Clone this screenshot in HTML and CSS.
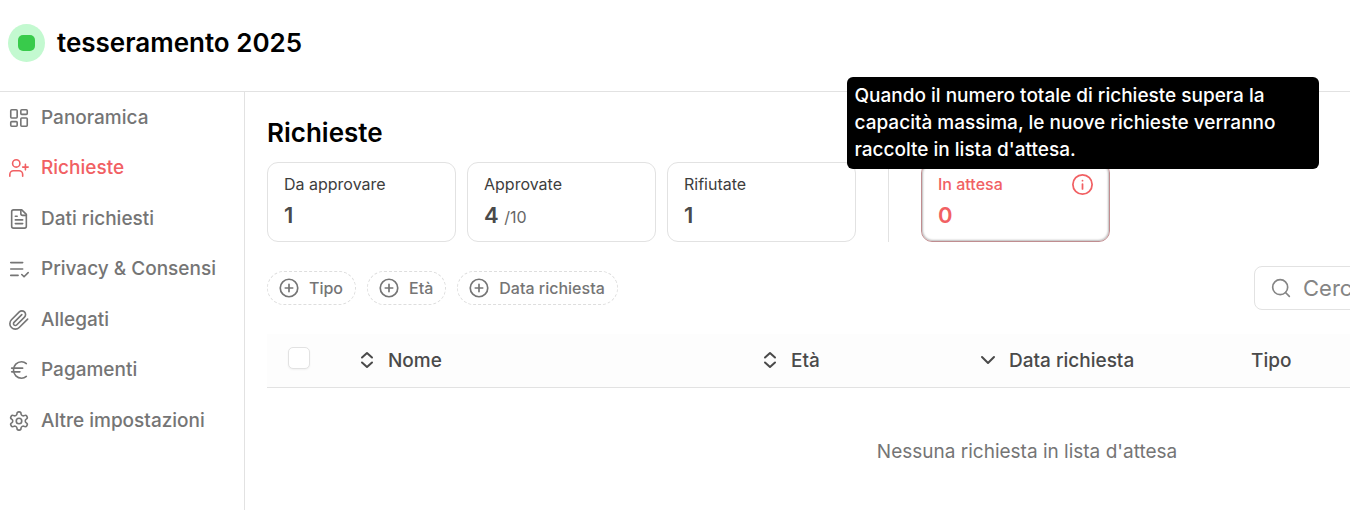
FILE: index.html
```html
<!DOCTYPE html>
<html lang="it">
<head>
  <meta charset="UTF-8" />
  <title>tesseramento 2025 | Richieste</title>
  <meta name="viewport" content="width=device-width, initial-scale=1.0" />
  <link rel="stylesheet" href="styles.css">
</head>
<body>
  <header class="page-header">
    <span class="status"><span class="status-dot"></span></span>
    <h1>tesseramento 2025</h1>
  </header>

  <div class="layout">
    <nav class="sidebar">
      <a href="#panoramica">
        <svg class="icon" viewBox="0 0 24 24"><rect x="3" y="3" width="7" height="9" rx="1"/><rect x="14" y="3" width="7" height="5" rx="1"/><rect x="14" y="12" width="7" height="9" rx="1"/><rect x="3" y="16" width="7" height="5" rx="1"/></svg>
        Panoramica
      </a>
      <a href="#richieste" class="active">
        <svg class="icon" viewBox="0 0 24 24"><path d="M16 21v-2a4 4 0 0 0-4-4H6a4 4 0 0 0-4 4v2"/><circle cx="9" cy="7" r="4"/><path d="M19 8v6M22 11h-6"/></svg>
        Richieste
      </a>
      <a href="#dati">
        <svg class="icon" viewBox="0 0 24 24"><path d="M15 2H6a2 2 0 0 0-2 2v16a2 2 0 0 0 2 2h12a2 2 0 0 0 2-2V7Z"/><path d="M14 2v4a2 2 0 0 0 2 2h4M10 9H8M16 13H8M16 17H8"/></svg>
        Dati richiesti
      </a>
      <a href="#privacy">
        <svg class="icon" viewBox="0 0 24 24"><path d="M3 5h13M3 12h13M3 19h8M15 18l2.500 2.500 4.500-4.500"/></svg>
        Privacy &amp; Consensi
      </a>
      <a href="#allegati">
        <svg class="icon" viewBox="0 0 24 24"><path d="m21.440 11.050-9.190 9.190a6 6 0 0 1-8.490-8.490l8.570-8.570A4 4 0 1 1 18 8.840l-8.590 8.570a2 2 0 0 1-2.830-2.830l8.490-8.480"/></svg>
        Allegati
      </a>
      <a href="#pagamenti">
        <svg class="icon" viewBox="0 0 24 24"><path d="M4 10h12M4 14h9M20 5a8 8 0 0 0-5.200-2A8.800 8.800 0 0 0 6 12c0 5 3.900 9 8.800 9 2 0 3.800-.8 5.200-2"/></svg>
        Pagamenti
      </a>
      <a href="#impostazioni">
        <svg class="icon" viewBox="0 0 24 24"><path d="M12.220 2h-.44a2 2 0 0 0-2 2v.18a2 2 0 0 1-1 1.730l-.43.25a2 2 0 0 1-2 0l-.15-.08a2 2 0 0 0-2.730.73l-.22.38a2 2 0 0 0 .73 2.730l.15.1a2 2 0 0 1 1 1.720v.51a2 2 0 0 1-1 1.740l-.15.09a2 2 0 0 0-.73 2.730l.22.38a2 2 0 0 0 2.730.73l.15-.08a2 2 0 0 1 2 0l.43.25a2 2 0 0 1 1 1.730V20a2 2 0 0 0 2 2h.44a2 2 0 0 0 2-2v-.18a2 2 0 0 1 1-1.730l.43-.25a2 2 0 0 1 2 0l.15.08a2 2 0 0 0 2.730-.73l.22-.39a2 2 0 0 0-.73-2.730l-.15-.08a2 2 0 0 1-1-1.740v-.5a2 2 0 0 1 1-1.740l.15-.09a2 2 0 0 0 .73-2.730l-.22-.38a2 2 0 0 0-2.730-.73l-.15.08a2 2 0 0 1-2 0l-.43-.25a2 2 0 0 1-1-1.730V4a2 2 0 0 0-2-2z"/><circle cx="12" cy="12" r="3"/></svg>
        Altre impostazioni
      </a>
    </nav>

    <main class="content">
      <h2>Richieste</h2>

      <div class="stats">
        <button type="button" class="stat">
          <span class="stat-label">Da approvare</span>
          <span class="stat-value">1</span>
        </button>
        <button type="button" class="stat">
          <span class="stat-label">Approvate</span>
          <span class="stat-value">4 <small>/10</small></span>
        </button>
        <button type="button" class="stat">
          <span class="stat-label">Rifiutate</span>
          <span class="stat-value">1</span>
        </button>
        <span class="divider"></span>
        <button type="button" class="stat selected" aria-describedby="waiting-tip">
          <span class="stat-label">In attesa
            <span class="info">
              <svg class="icon" viewBox="0 0 24 24"><circle cx="12" cy="12" r="11"/><path d="M12 17v-5.500M12 7.500v.1"/></svg>
              <span class="tooltip" id="waiting-tip" role="tooltip">Quando il numero totale di richieste supera la capacità massima, le nuove richieste verranno raccolte in lista d'attesa.</span>
            </span>
          </span>
          <span class="stat-value">0</span>
        </button>
      </div>

      <div class="toolbar">
        <div class="filters">
          <button type="button" class="chip">
            <svg class="icon" viewBox="0 0 24 24"><circle cx="12" cy="12" r="10.500"/><path d="M12 7.500v9M7.500 12h9"/></svg>
            Tipo
          </button>
          <button type="button" class="chip">
            <svg class="icon" viewBox="0 0 24 24"><circle cx="12" cy="12" r="10.500"/><path d="M12 7.500v9M7.500 12h9"/></svg>
            Età
          </button>
          <button type="button" class="chip">
            <svg class="icon" viewBox="0 0 24 24"><circle cx="12" cy="12" r="10.500"/><path d="M12 7.500v9M7.500 12h9"/></svg>
            Data richiesta
          </button>
        </div>
        <label class="search">
          <svg class="icon" viewBox="0 0 24 24"><circle cx="11" cy="11" r="9"/><path d="m22 22-4.600-4.600"/></svg>
          <input type="search" placeholder="Cerca" aria-label="Cerca">
        </label>
      </div>

      <table class="requests">
        <thead>
          <tr>
            <th class="col-check"><input type="checkbox" aria-label="Seleziona tutte"></th>
            <th class="col-name">
              <button type="button" class="sort">
                <svg class="icon" viewBox="0 0 18 18"><path d="M4 6.500 9 2l5 4.500M4 11.500 9 16l5-4.500"/></svg>
                Nome
              </button>
            </th>
            <th class="col-age">
              <button type="button" class="sort">
                <svg class="icon" viewBox="0 0 18 18"><path d="M4 6.500 9 2l5 4.500M4 11.500 9 16l5-4.500"/></svg>
                Età
              </button>
            </th>
            <th class="col-date">
              <button type="button" class="sort">
                <svg class="icon" viewBox="0 0 18 18"><path d="m3 6 6 6 6-6"/></svg>
                Data richiesta
              </button>
            </th>
            <th>Tipo</th>
          </tr>
        </thead>
        <tbody>
          <tr>
            <td colspan="5" class="empty">Nessuna richiesta in lista d'attesa</td>
          </tr>
        </tbody>
      </table>
    </main>
  </div>
</body>
</html>
```
FILE: styles.css
```css
* {
  box-sizing: border-box;
}

body {
  font-family: Inter, sans-serif;
  font-size: 19px;
  color: #000;
  background: #fff;
  margin: 0;
  min-height: 100vh;
  overflow-y: hidden;
}

h1, h2 {
  font-size: 26px;
  font-weight: 600;
  line-height: 36px;
  margin: 0;
}

button {
  font-family: inherit;
  color: inherit;
  background: none;
  border: none;
  padding: 0;
  cursor: pointer;
}

.icon {
  width: 20px;
  height: 20px;
  flex: none;
  fill: none;
  stroke: currentColor;
  stroke-width: 2;
  stroke-linecap: round;
  stroke-linejoin: round;
}

.page-header {
  display: flex;
  align-items: center;
  gap: 12px;
  padding: 24px 8px 29px;
  border-bottom: 1px solid #e2e2e2;
}

.status {
  display: flex;
  align-items: center;
  justify-content: center;
  width: 37px;
  height: 38px;
  border-radius: 50%;
  background: #c3f9d0;
}

.status-dot {
  width: 17px;
  height: 16px;
  border-radius: 5px;
  background: #38cb4b;
}

/* the table is wider than small windows, clip it sideways only */
.layout {
  display: flex;
  overflow-x: clip;
}

/* Sidebar */
.sidebar {
  flex: none;
  width: 245px;
  padding: 9px 8px 62px;
  border-right: 1px solid #e2e2e2;
  display: grid;
  grid-template-rows: repeat(7, 1fr);
}

.sidebar a {
  display: flex;
  align-items: flex-start;
  gap: 11px;
  line-height: 34px;
  font-weight: 500;
  color: #757575;
  text-decoration: none;
}

.sidebar .icon {
  width: 22px;
  height: 22px;
  margin-top: 6px;
  stroke-width: 1.75;
}

.sidebar a.active {
  color: #f16063;
}

/* Main column */
.content {
  flex: 0 0 1542px;
  min-width: 0;
  padding: 23px 0 0 22px;
}

.stats {
  display: flex;
  gap: 11px;
  margin-top: 11px;
}

.stat {
  width: 189px;
  height: 80px;
  padding: 0 16px;
  border: 1px solid #e2e2e2;
  border-radius: 11px;
  text-align: left;
  color: #4a4a4a;
}

.stat-label {
  display: flex;
  align-items: center;
  justify-content: space-between;
  font-size: 16px;
  line-height: 24px;
  color: #3d3d3d;
}

.stat-value {
  display: block;
  margin-top: 2px;
  font-size: 22px;
  font-weight: 600;
  line-height: 34px;
}

.stat-value small {
  font-size: 16px;
  font-weight: 400;
  line-height: 1;
  color: #666;
}

.divider {
  width: 1px;
  margin: 0 21px;
  background: #e2e2e2;
}

.stat.selected {
  border-color: #c08d90;
  box-shadow: inset 0 0 2px 1px #bbb;
  color: #f16063;
}

.selected .stat-label {
  font-weight: 500;
  color: #f16063;
}

.info {
  position: relative;
  display: flex;
}

.info .icon {
  width: 21px;
  height: 21px;
}

.tooltip {
  position: absolute;
  bottom: 26px;
  left: 50%;
  transform: translateX(-50%);
  width: 472px;
  padding: 5px 8px 6px;
  border-radius: 6px;
  background: #000;
  color: #fff;
  font-size: 19px;
  font-weight: 500;
  line-height: 27px;
}

.toolbar {
  display: flex;
  align-items: center;
  justify-content: space-between;
  margin-top: 24px;
}

.filters {
  display: flex;
  gap: 11px;
}

.chip {
  display: flex;
  align-items: center;
  gap: 10px;
  height: 34px;
  padding: 0 12px 0 11px;
  border: 1px dashed #dedede;
  border-radius: 17px;
  font-size: 16px;
  font-weight: 500;
  color: #757575;
}

.search {
  display: flex;
  align-items: center;
  gap: 12px;
  width: 533px;
  height: 44px;
  padding: 0 16px;
  border: 1px solid #e2e2e2;
  border-radius: 8px;
  color: #858585;
}

.search input {
  flex: 1;
  border: none;
  outline: none;
  padding: 0;
  font-family: inherit;
  font-size: 22px;
}

.search input::placeholder {
  color: #858585;
}

/* Requests table */
.requests {
  width: 100%;
  margin-top: 24px;
  border-collapse: collapse;
  table-layout: fixed;
}

.requests th {
  height: 53px;
  padding: 0 16px;
  text-align: left;
  font-size: 19px;
  font-weight: 500;
  color: #4a4a4a;
  background: #fdfdfd;
  border-bottom: 1px solid #e2e2e2;
}

.requests .col-check {
  width: 75px;
  padding-left: 21px;
}

.col-name {
  width: 403px;
}

.col-age {
  width: 218px;
}

.col-date {
  width: 272px;
}

.requests input {
  appearance: none;
  display: block;
  width: 22px;
  height: 22px;
  margin: 0 0 4px;
  border: 1px solid #e2e2e2;
  border-radius: 5px;
  background: #fff;
  box-shadow: 0 1px 2px rgba(0, 0, 0, 0.05);
}

.sort {
  display: flex;
  align-items: center;
  gap: 12px;
  font-size: 19px;
  font-weight: 500;
}

.sort .icon {
  width: 18px;
  height: 18px;
}

.empty {
  height: 129px;
  padding: 0;
  text-align: center;
  color: #757575;
}
```
